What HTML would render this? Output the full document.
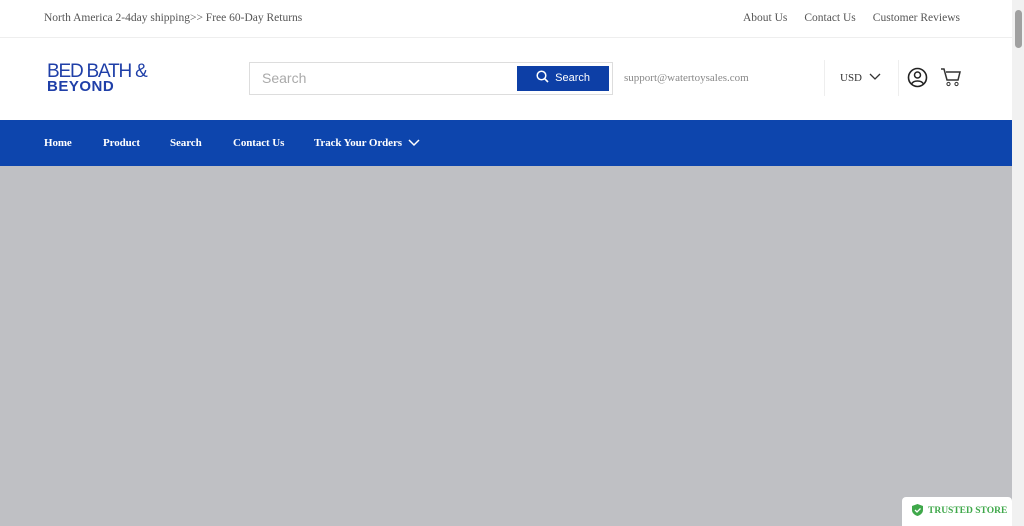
<!DOCTYPE html>
<html><head><style>
body{margin:0;width:1024px;height:526px;overflow:hidden;font-family:"Liberation Serif",serif;background:#fff;position:relative}
.top{height:37px;border-bottom:1px solid #eee;font-size:11.5px;color:#555;position:relative}
.top .l{position:absolute;left:44px;top:12px}
.top .r{position:absolute;right:64px;top:12px}
.top .r span{margin-left:17px}
.logo{position:absolute;left:47px;top:64px;color:#1f3fa8;font-family:"Liberation Sans",sans-serif;line-height:15px}
.search{position:absolute;left:249px;top:62px;width:364px;height:33px;border:1px solid #ddd;box-sizing:border-box}
.search span{position:absolute;left:12px;top:7px;font-family:"Liberation Sans",sans-serif;font-size:14px;color:#aaa}
.btn{position:absolute;left:267px;top:3px;width:92px;height:25px;background:#0d3fa6;color:#fff;font-family:"Liberation Sans",sans-serif;font-size:11px;line-height:25px;text-align:center}
.nav{position:absolute;top:120px;left:0;width:1012px;height:46px;background:#0d45ad;color:#fff;font-size:11px;font-weight:600;letter-spacing:-0.1px}
.nav span{position:absolute;top:17px}
.gray{position:absolute;top:166px;left:0;width:1012px;height:360px;background:#bfc0c4}
.sb{position:absolute;right:0;top:0;width:12px;height:526px;background:#f1f1f1}
.thumb{position:absolute;right:2px;top:10px;width:7px;height:38px;background:#a0a0a0;border-radius:4px}
.trust{position:absolute;left:902px;top:497px;width:110px;height:29px;background:#fff;border-radius:4px 4px 0 0;font-size:10px;font-weight:bold;color:#3fa84a;white-space:nowrap}
</style></head><body>
<div class="top"><span class="l">North America 2-4day shipping&gt;&gt; Free 60-Day Returns</span><span class="r"><span>About Us</span><span>Contact Us</span><span>Customer Reviews</span></span></div>
<div class="logo"><div style="font-size:19px;letter-spacing:-1.2px">BED BATH &amp;</div><div style="font-size:15px;font-weight:900;letter-spacing:0.5px">BEYOND</div></div>
<div class="search"><span>Search</span><div class="btn"><svg width="13" height="13" style="vertical-align:-2px"><circle cx="5.5" cy="5.5" r="4.3" stroke="#fff" fill="none" stroke-width="1.5"/><path d="M8.7 8.7l3.3 3.3" stroke="#fff" stroke-width="1.6"/></svg>&nbsp; Search</div></div>
<div style="position:absolute;left:624px;top:72px;font-size:11px;color:#888">support@watertoysales.com</div>
<div style="position:absolute;left:824px;top:60px;width:1px;height:36px;background:#eee"></div>
<div style="position:absolute;left:840px;top:72px;font-size:11px;color:#333">USD</div>
<svg style="position:absolute;left:869px;top:73px" width="12" height="8"><path d="M1 1l5 5 5-5" stroke="#333" fill="none" stroke-width="1.3"/></svg>
<div style="position:absolute;left:898px;top:60px;width:1px;height:36px;background:#eee"></div>
<svg style="position:absolute;left:907px;top:67px" width="21" height="21"><circle cx="10.5" cy="10.5" r="9" stroke="#222" fill="none" stroke-width="1.6"/><circle cx="10.5" cy="8" r="3" stroke="#222" fill="none" stroke-width="1.5"/><path d="M4.5 17c2-4 10-4 12 0" stroke="#222" fill="none" stroke-width="1.5"/></svg>
<svg style="position:absolute;left:940px;top:67px" width="22" height="20"><path d="M1 2h3l3 11h11l2-8H6" stroke="#333" fill="none" stroke-width="1.5"/><circle cx="8.5" cy="17" r="1.6" fill="none" stroke="#333"/><circle cx="16.5" cy="17" r="1.6" fill="none" stroke="#333"/></svg>
<div class="nav"><span style="left:44px">Home</span><span style="left:103px">Product</span><span style="left:170px">Search</span><span style="left:233px">Contact Us</span><span style="left:314px">Track Your Orders</span>
<svg style="position:absolute;left:408px;top:19px" width="12" height="8"><path d="M1 1l5 5 5-5" stroke="#fff" fill="none" stroke-width="1.5"/></svg></div>
<div class="gray"></div>
<div class="trust"><svg style="position:absolute;left:10px;top:7px" width="11" height="12"><path d="M5.5 0L11 2v4c0 3-2.5 5-5.5 6C2.5 11 0 9 0 6V2z" fill="#3fa84a"/><path d="M3 6l2 2 3.5-3.5" stroke="#fff" fill="none" stroke-width="1.3"/></svg><span style="position:absolute;left:26px;top:9px;font-size:9.5px">TRUSTED STORE</span></div>
<div class="sb"><div class="thumb"></div></div>
</body></html>
